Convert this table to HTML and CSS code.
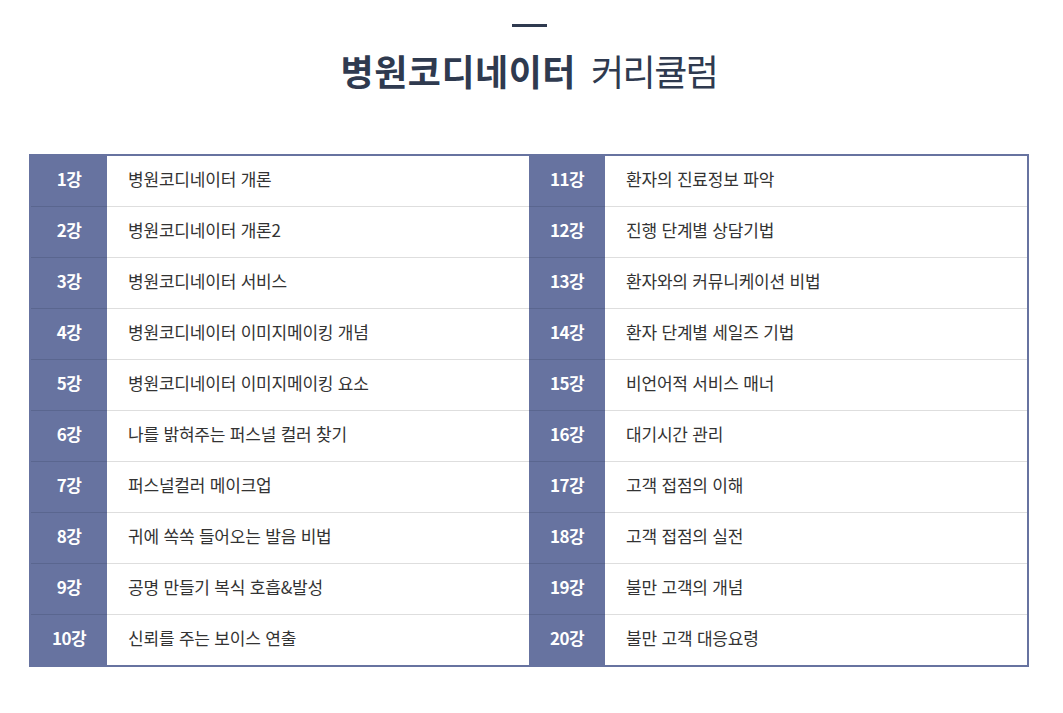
FILE: index.html
```html
<!DOCTYPE html>
<html lang="ko">
<head>
<meta charset="utf-8">
<title>병원코디네이터 커리큘럼</title>
<link rel="stylesheet" href="styles.css">
</head>
<body>
<div class="page">
  <header class="head">
    <span class="dash"></span>
    <h1 class="title"><strong>병원코디네이터</strong> <span class="light">커리큘럼</span></h1>
  </header>
  <div class="table">
    <ul class="col">
      <li class="row"><span class="num">1강</span><span class="txt">병원코디네이터 개론</span></li>
      <li class="row"><span class="num">2강</span><span class="txt">병원코디네이터 개론2</span></li>
      <li class="row"><span class="num">3강</span><span class="txt">병원코디네이터 서비스</span></li>
      <li class="row"><span class="num">4강</span><span class="txt">병원코디네이터 이미지메이킹 개념</span></li>
      <li class="row"><span class="num">5강</span><span class="txt">병원코디네이터 이미지메이킹 요소</span></li>
      <li class="row"><span class="num">6강</span><span class="txt">나를 밝혀주는 퍼스널 컬러 찾기</span></li>
      <li class="row"><span class="num">7강</span><span class="txt">퍼스널컬러 메이크업</span></li>
      <li class="row"><span class="num">8강</span><span class="txt">귀에 쏙쏙 들어오는 발음 비법</span></li>
      <li class="row"><span class="num">9강</span><span class="txt">공명 만들기 복식 호흡&amp;발성</span></li>
      <li class="row"><span class="num">10강</span><span class="txt">신뢰를 주는 보이스 연출</span></li>
    </ul>
    <ul class="col">
      <li class="row"><span class="num">11강</span><span class="txt">환자의 진료정보 파악</span></li>
      <li class="row"><span class="num">12강</span><span class="txt">진행 단계별 상담기법</span></li>
      <li class="row"><span class="num">13강</span><span class="txt">환자와의 커뮤니케이션 비법</span></li>
      <li class="row"><span class="num">14강</span><span class="txt">환자 단계별 세일즈 기법</span></li>
      <li class="row"><span class="num">15강</span><span class="txt">비언어적 서비스 매너</span></li>
      <li class="row"><span class="num">16강</span><span class="txt">대기시간 관리</span></li>
      <li class="row"><span class="num">17강</span><span class="txt">고객 접점의 이해</span></li>
      <li class="row"><span class="num">18강</span><span class="txt">고객 접점의 실전</span></li>
      <li class="row"><span class="num">19강</span><span class="txt">불만 고객의 개념</span></li>
      <li class="row"><span class="num">20강</span><span class="txt">불만 고객 대응요령</span></li>
    </ul>
  </div>
</div>
</body>
</html>
```

FILE: styles.css
```css
* { box-sizing: border-box; }
html, body { margin: 0; padding: 0; background: #fff; }
body {
  font-family: "Noto Sans CJK KR", "Noto Sans", sans-serif;
  color: #333;
}
.page {
  width: 1000px;
  margin-left: 29px;
}
.head {
  display: flex;
  flex-direction: column;
  align-items: center;
  padding-top: 24px;
}
.dash {
  display: block;
  width: 35px;
  height: 3px;
  background: #2f3a4f;
}
.title {
  margin: 18px 0 0;
  font-size: 36px;
  line-height: 50px;
  font-weight: 400;
  color: #2f3a4f;
}
.title strong {
  font-weight: 700;
  letter-spacing: 0.5px;
  margin-right: 5px;
}
.title .light { letter-spacing: -1.5px; }
.table {
  margin-top: 59px;
  display: grid;
  grid-template-columns: 1fr 1fr;
  border: 2px solid #6773a0;
}
.col {
  list-style: none;
  margin: 0;
  padding: 0;
}
.row {
  display: flex;
  height: 51px;
  border-bottom: 1px solid #dedede;
}
.row:last-child { height: 50px; border-bottom: 0; }
.num {
  flex: 0 0 76px;
  background: #6773a0;
  color: #fff;
  font-weight: 700;
  font-size: 17px;
  letter-spacing: -0.5px;
  display: flex;
  align-items: center;
  justify-content: center;
  padding-bottom: 5px;
  margin-bottom: -1px;
  border-bottom: 1px solid #5a668f;
}
.row:last-child .num { margin-bottom: 0; border-bottom: 0; }
.txt {
  flex: 1;
  display: flex;
  align-items: center;
  padding-left: 21px;
  padding-bottom: 5px;
  font-size: 17px;
  letter-spacing: -0.2px;
  color: #333;
}
```
